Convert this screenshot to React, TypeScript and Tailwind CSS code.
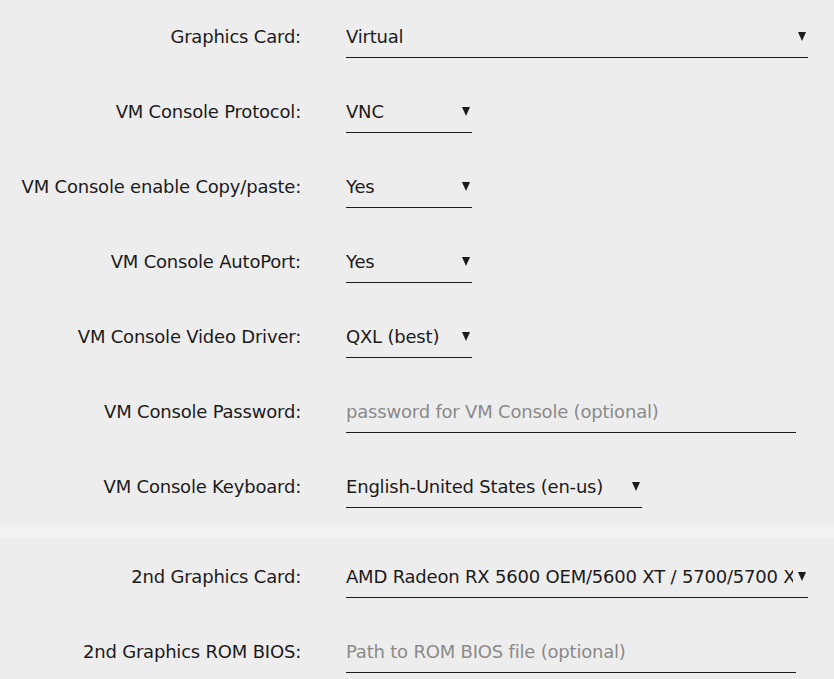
import React from "react";

type Row = {
  label: string;
  kind: "select" | "input";
  value: string;
  width: string;
};

const section1: Row[] = [
  { label: "Graphics Card:", kind: "select", value: "Virtual", width: "w-[462px]" },
  { label: "VM Console Protocol:", kind: "select", value: "VNC", width: "w-[126px]" },
  { label: "VM Console enable Copy/paste:", kind: "select", value: "Yes", width: "w-[126px]" },
  { label: "VM Console AutoPort:", kind: "select", value: "Yes", width: "w-[126px]" },
  { label: "VM Console Video Driver:", kind: "select", value: "QXL (best)", width: "w-[126px]" },
  { label: "VM Console Password:", kind: "input", value: "password for VM Console (optional)", width: "w-[450px]" },
  { label: "VM Console Keyboard:", kind: "select", value: "English-United States (en-us)", width: "w-[296px]" },
];

const section2: Row[] = [
  { label: "2nd Graphics Card:", kind: "select", value: "AMD Radeon RX 5600 OEM/5600 XT / 5700/5700 XT", width: "w-[462px]" },
  { label: "2nd Graphics ROM BIOS:", kind: "input", value: "Path to ROM BIOS file (optional)", width: "w-[450px]" },
];

function FormRow({ row }: { row: Row }) {
  return (
    <div className="flex h-[75px] items-start pt-[24px]">
      <div className="w-[301px] shrink-0 text-right leading-[26px] text-[#1c1b1b]">{row.label}</div>
      <div className="ml-[45px]">
        <div
          className={`${row.width} relative flex h-[34px] items-start border-b border-[#1c1b1b] pb-[7px] ${
            row.kind === "select" ? "pr-[15px]" : ""
          }`}
        >
          <span
            className={`block overflow-hidden whitespace-nowrap leading-[26px] ${
              row.kind === "input" ? "text-[#8a8a8a]" : "text-[#1c1b1b]"
            }`}
          >
            {row.value}
          </span>
          {row.kind === "select" && (
            <svg
              className="absolute right-[2px] top-[8px]"
              width="8"
              height="9"
              viewBox="0 0 8 9"
            >
              <polygon points="0,0 8,0 4,9" fill="#1c1b1b" />
            </svg>
          )}
        </div>
      </div>
    </div>
  );
}

export default function App() {
  return (
    <div
      className="w-[834px] h-[679px] overflow-hidden bg-[#ededed] text-[18px] tracking-[-0.2px]"
      style={{ fontFamily: '"DejaVu Sans", sans-serif' }}
    >
      <div className="h-[524px] overflow-hidden">
        {section1.map((r) => (
          <FormRow key={r.label} row={r} />
        ))}
      </div>
      <div className="h-[14px] bg-[#f2f2f2]" />
      <div className="pt-[2px]">
        {section2.map((r) => (
          <FormRow key={r.label} row={r} />
        ))}
      </div>
    </div>
  );
}
